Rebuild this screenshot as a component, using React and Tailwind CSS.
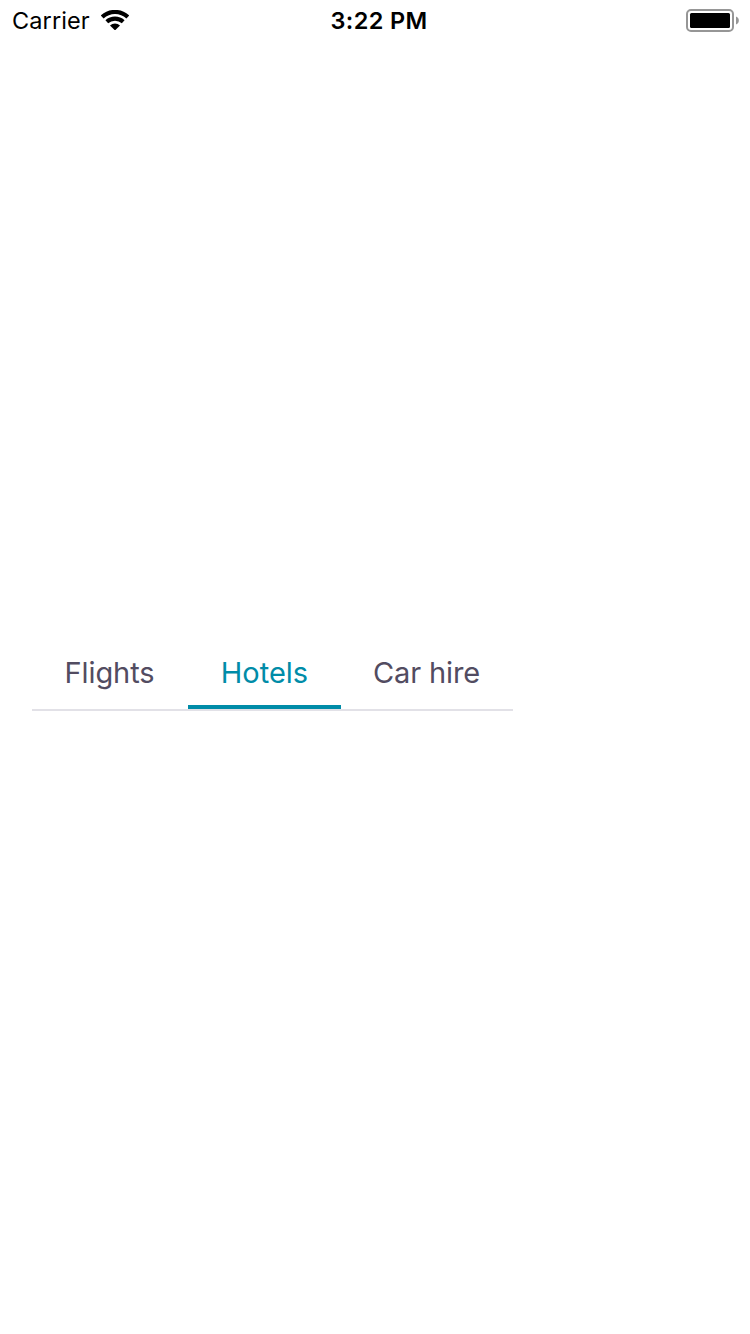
const tabs = [
  { label: 'Flights', width: 'w-[156px]', text: 'pr-px tracking-[-0.1px]' },
  { label: 'Hotels', width: 'w-[153px]', text: 'tracking-[0px]', active: true },
  { label: 'Car hire', width: 'w-[172px]', text: 'pr-px tracking-[-0.15px]' },
];

function WifiIcon() {
  return (
    <svg className="mb-0.5 ml-[11px] h-5 w-7" viewBox="0 0 28 20" fill="none" stroke="#000">
      <path d="M1.2 7C8.5 0.2 19.5 0.2 26.8 7" strokeWidth="4.1" />
      <path d="M5.8 11.7C10.4 7.6 17.6 7.6 22.2 11.7" strokeWidth="4.1" />
      <path d="M14 20.4L9 15.6C11.9 12.9 16.1 12.9 19 15.6Z" fill="#000" stroke="none" />
    </svg>
  );
}

function BatteryIcon() {
  return (
    <svg className="h-6 w-[54px]" viewBox="0 0 54 24">
      <rect x="1" y="1" width="46" height="21" rx="4" fill="none" stroke="#969696" strokeWidth="2" />
      <rect x="4" y="4" width="40" height="15" rx="1.5" fill="#000" />
      <path d="M50 7.5C53.8 8.8 53.8 14.2 50 15.5Z" fill="#969696" />
    </svg>
  );
}

function StatusBar() {
  return (
    <header className="grid h-[42px] grid-cols-[1fr_auto_1fr] items-center pl-2 text-black">
      <div className="flex items-center pl-1">
        <span className="w-[78px] whitespace-nowrap text-[23.5px] leading-10 tracking-[0.1px]">Carrier</span>
        <WifiIcon />
      </div>
      <span className="whitespace-nowrap text-[23.5px] leading-10 font-semibold tracking-[0.35px]">3:22 PM</span>
      <div className="flex justify-end pr-[10px]">
        <BatteryIcon />
      </div>
    </header>
  );
}

export default function App() {
  return (
    <div className="flex h-[1334px] w-[750px] flex-col bg-white font-['Inter',sans-serif]">
      <StatusBar />
      <nav className="mt-[595px] ml-8 flex h-[74px] w-[481px] border-b-2 border-[#e2e1e7]">
        {tabs.map((tab) => (
          <button
            key={tab.label}
            className={`flex h-[72px] items-center justify-center border-b-4 pt-[3px] text-[29px] leading-9 font-normal whitespace-nowrap ${tab.width} ${tab.text} ${
              tab.active ? 'border-[#008ca8] text-[#008ca8]' : 'border-transparent text-[#524c61]'
            }`}
          >
            {tab.label}
          </button>
        ))}
      </nav>
    </div>
  );
}
